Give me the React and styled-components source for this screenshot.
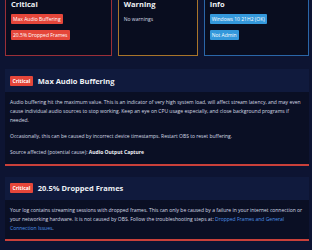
import React from 'react';
import styled, { createGlobalStyle } from 'styled-components';

const Global = createGlobalStyle`
  html, body { margin: 0; padding: 0; background: #0d1432; }
  body {
    font-family: "Open Sans", "Noto Sans", "Liberation Sans", sans-serif;
    color: #dde2ea;
    overflow: hidden;
  }
`;

const Page = styled.div`
  margin-top: -6px;
  padding: 0 3px 0 5px;
`;

const SummaryRow = styled.div`
  display: flex;
  gap: 6px;
  margin-bottom: 13px;
`;

const SummaryBox = styled.div`
  flex: 1 1 auto;
  background: #090d1f;
  border: 1px solid ${p => p.$border};
  padding: 5px 5px 9px;
`;

const BoxTitle = styled.div`
  font-size: 7.5px;
  font-weight: 700;
  line-height: 9px;
  color: #eef1f5;
  margin-bottom: 5px;
`;

const Badge = styled.div`
  width: fit-content;
  font-size: 5px;
  line-height: 6px;
  padding: 2px 2px;
  border-radius: 1px;
  color: #ffffff;
  background: ${p => p.$bg};
  margin-bottom: 6px;
  white-space: nowrap;
`;

const Note = styled.div`
  font-size: 5px;
  line-height: 6px;
  color: #d6dbe4;
  padding-top: 2px;
`;

const Card = styled.section`
  background: #0a0f24;
  border-bottom: 2px solid #c9403a;
  margin-bottom: 11px;
`;

const CardHeader = styled.div`
  display: flex;
  align-items: center;
  gap: 5px;
  background: #101a3d;
  padding: 6.5px 5px;
`;

const Level = styled.span`
  font-size: 5px;
  font-weight: 700;
  line-height: 6px;
  padding: 2px 2.5px;
  border-radius: 1px;
  background: #e5463a;
  color: #fff;
`;

const CardTitle = styled.h3`
  margin: 0;
  font-size: 7.5px;
  font-weight: 700;
  line-height: 10px;
  color: #eef1f5;
`;

const CardBody = styled.div`
  padding: 6px 5px 6.5px 5px;
  font-size: 5px;
  line-height: 9px;
  color: #d6dbe4;
  p { margin: 0 0 7px; }
  p:last-child { margin-bottom: 0; }
  b { font-weight: 700; color: #eef1f5; }
`;

const Link = styled.a`
  color: #4f93e6;
  text-decoration: none;
`;

export default function App() {
  return (
    <>
      <Global />
      <Page>
        <SummaryRow>
          <SummaryBox $border="#9b2f38">
            <BoxTitle>Critical</BoxTitle>
            <Badge $bg="#e5463a">Max Audio Buffering</Badge>
            <Badge $bg="#e5463a">20.5% Dropped Frames</Badge>
          </SummaryBox>
          <SummaryBox $border="#a8742a">
            <BoxTitle>Warning</BoxTitle>
            <Note>No warnings</Note>
          </SummaryBox>
          <SummaryBox $border="#2a66a8">
            <BoxTitle>Info</BoxTitle>
            <Badge $bg="#3498db">Windows 10 21H2 (OK)</Badge>
            <Badge $bg="#3498db">Not Admin</Badge>
          </SummaryBox>
        </SummaryRow>

        <Card>
          <CardHeader>
            <Level>Critical</Level>
            <CardTitle>Max Audio Buffering</CardTitle>
          </CardHeader>
          <CardBody>
            <p>
              Audio buffering hit the maximum value. This is an indicator of very high system load, will affect stream latency, and may even cause individual audio sources to stop working. Keep an eye on CPU usage especially, and close background programs if needed.
            </p>
            <p>
              Occasionally, this can be caused by incorrect device timestamps. Restart OBS to reset buffering.
            </p>
            <p>
              Source affected (potential cause): <b>Audio Output Capture</b>
            </p>
          </CardBody>
        </Card>

        <Card>
          <CardHeader>
            <Level>Critical</Level>
            <CardTitle>20.5% Dropped Frames</CardTitle>
          </CardHeader>
          <CardBody>
            <p>
              Your log contains streaming sessions with dropped frames. This can only be caused by a failure in your internet connection or your networking hardware. It is not caused by OBS. Follow the troubleshooting steps at:{' '}
              <Link href="#">Dropped Frames and General Connection Issues</Link>.
            </p>
          </CardBody>
        </Card>
      </Page>
    </>
  );
}
